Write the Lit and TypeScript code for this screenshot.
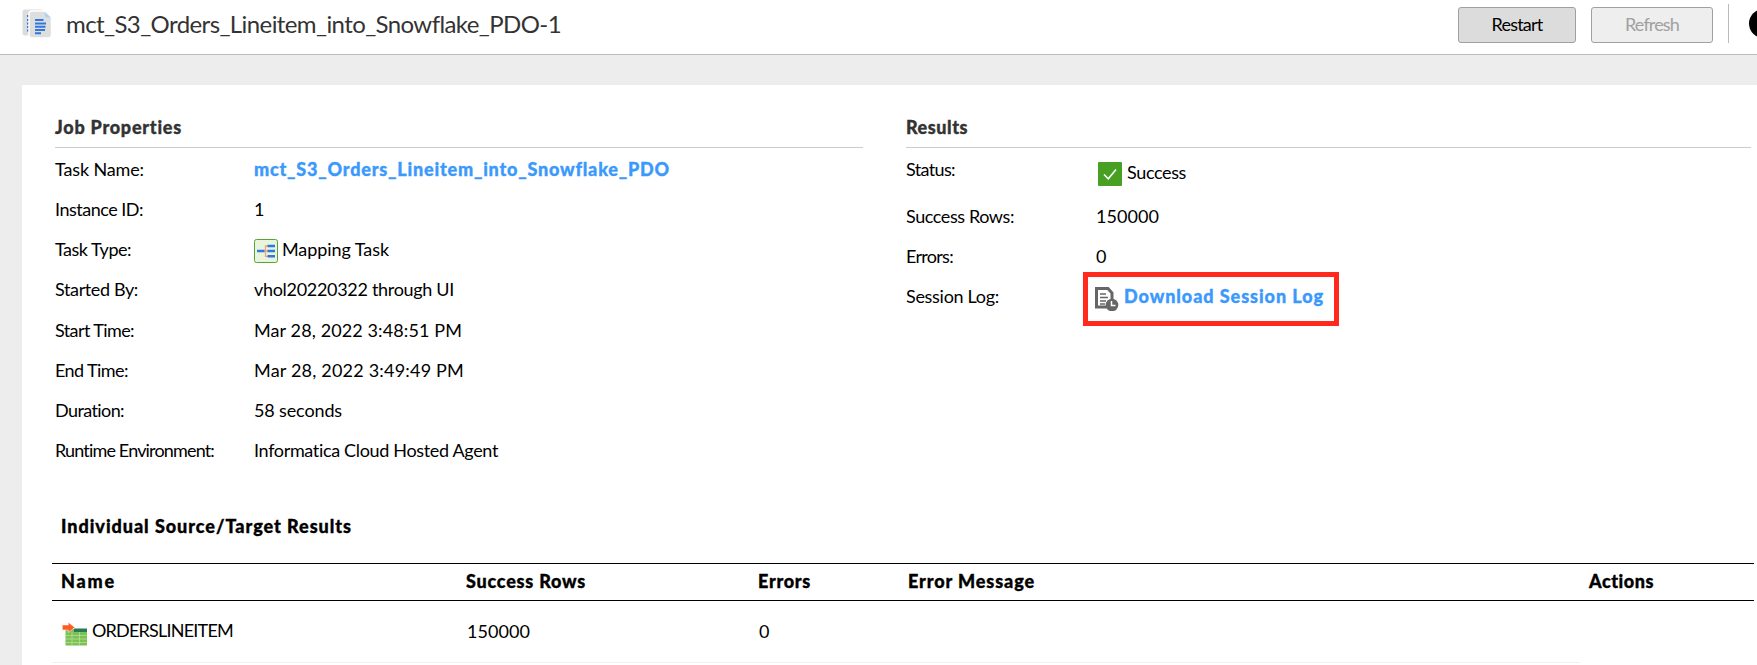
import { LitElement, html, css } from "lit";
import { customElement, property } from "lit/decorators.js";

/** A single-line label tracked so that it fills a given measure. */
@customElement("ui-text")
class UiText extends LitElement {
  @property({ type: Number }) measure = 0;
  @property() text = "";
  static styles = css`
    :host { display: block; flex: none; height: 24px; line-height: 24px; white-space: nowrap; }
    .t { display: inline-block; font-variant-ligatures: none; }
  `;
  render() { return html`<span class="t">${this.text}</span>`; }
  updated() {
    const el = this.renderRoot.querySelector<HTMLElement>(".t")!;
    el.style.letterSpacing = "0px";
    const natural = el.getBoundingClientRect().width;
    el.style.letterSpacing = `${(this.measure - natural) / this.text.length}px`;
  }
}

const t = (text: string, measure: number) => html`<ui-text .text=${text} .measure=${measure}></ui-text>`;

const docsIcon = html`<svg class="icon" width="30" height="30" viewBox="0 0 30 30">
  <rect x=".5" y=".5" width="21" height="26" rx="2.5" fill="#dcdcdc"/>
  <path d="M5 7h3M5 11h3M5 14.500h3M5 18h3M5 21.500h3" stroke="#2f78e0" stroke-width="2"/>
  <path d="M10 2h13l6.500 7v17a3 3 0 0 1-3 3h-16.500a3 3 0 0 1-3-3v-21a3 3 0 0 1 3-3z" fill="#dedede" stroke="#fff" stroke-width="1.500"/>
  <path d="M23 3v3.500a2 2 0 0 0 2 2h4z" fill="#a9d3fb"/>
  <path d="M13 11h8.500M13 14.500h11M13 17.700h10.500M13 21h10M13 24.300h6" stroke="#2f78e0" stroke-width="2"/>
</svg>`;

const mappingIcon = html`<svg class="icon" width="24" height="24" viewBox="0 0 24 24">
  <rect x=".5" y=".5" width="23" height="23" rx="2" fill="#e8f5dc" stroke="#55a630"/>
  <path d="M14 7h-2.500v10.300h2.500M10 12h4" fill="none" stroke="#f4a07c" stroke-width="1.300"/>
  <path d="M3 12h7.500M13.500 7h7.500M13.500 12h7.500M13.500 17.300h7.500" stroke="#2f78e0" stroke-width="2.600"/>
</svg>`;

const checkIcon = html`<svg class="icon" width="24" height="24" viewBox="0 0 24 24">
  <rect width="24" height="24" rx="1" fill="#48a023"/>
  <path d="M6 12.500l4.300 4.200L18 7.500" fill="none" stroke="#fff" stroke-width="1.600"/>
</svg>`;

const logIcon = html`<svg class="icon" width="24" height="24" viewBox="0 0 24 24">
  <path d="M1.500 1.500h11.500l4 4.500V20h-15.500z" fill="#fff" stroke="#666" stroke-width="3"/>
  <path d="M5 7h6M5 10.500h8M5 14h6M5 17h5" stroke="#666" stroke-width="1.500"/>
  <circle cx="17" cy="18" r="6.300" fill="#666"/>
  <path d="M16.500 14v4.500h4" fill="none" stroke="#fff" stroke-width="1.500"/>
</svg>`;

const tableIcon = html`<svg class="icon" width="26" height="24" viewBox="0 0 26 24">
  <rect x="3.500" y="7" width="21.500" height="16.500" fill="#7cc152"/>
  <rect x="12" y="6.500" width="13" height="3.500" fill="#267a55"/>
  <path d="M3.500 13.500h21.500M3.500 17h21.500M3.500 20.500h21.500M10 10v13.500M17.500 10v13.500" stroke="#b5dd9b" stroke-width=".8"/>
  <path d="M.3 3h6V.3l6.500 5.200-6.500 5V8h-6z" fill="#ff5a26" stroke="#fff" stroke-width=".5"/>
</svg>`;

const jobRows = [
  { label: "Task Name:", lw: 89, value: "mct_S3_Orders_Lineitem_into_Snowflake_PDO", vw: 416, link: true },
  { label: "Instance ID:", lw: 88, value: "1", vw: 9 },
  { label: "Task Type:", lw: 76, value: "Mapping Task", vw: 107, icon: mappingIcon },
  { label: "Started By:", lw: 83, value: "vhol20220322 through UI", vw: 200 },
  { label: "Start Time:", lw: 79, value: "Mar 28, 2022 3:48:51 PM", vw: 208 },
  { label: "End Time:", lw: 73, value: "Mar 28, 2022 3:49:49 PM", vw: 210 },
  { label: "Duration:", lw: 69, value: "58 seconds", vw: 88 },
  { label: "Runtime Environment:", lw: 159, value: "Informatica Cloud Hosted Agent", vw: 244 },
];

@customElement("app-root")
class AppRoot extends LitElement {
  static styles = css`
    :host { display: flex; flex-direction: column; height: 665px; overflow: hidden; background: #ededed;
      font-family: Lato, "Open Sans", sans-serif; font-size: 18px; color: #000; }
    * { box-sizing: border-box; }
    .icon { display: block; flex: none; }
    .head { flex: none; height: 55px; display: flex; align-items: flex-start; background: #fff; border-bottom: 1px solid #bbb; padding-left: 22px; overflow: hidden; }
    .head .icon { margin: 9px 14px 0 0; }
    .title { font-size: 24px; color: #333; margin-top: 12px; flex: 1; }
    .btn { flex: none; display: flex; justify-content: center; height: 36px; margin-top: 7px; padding: 4px 0 0; border: 1px solid #a0a0a0; border-radius: 3px; background: #dcdcdc; font: inherit; color: #000; }
    .restart { width: 118px; margin-right: 15px; }
    .refresh { width: 122px; background: #eee; color: #a0a0a0; margin-right: 15px; }
    .rule { width: 1px; height: 39px; margin: 4px 20px 0 0; background: #bbb; }
    .clip { width: 8px; height: 30px; margin-top: 9px; overflow: hidden; }
    .avatar { width: 29px; height: 29px; border-radius: 50%; background: #000; }
    .card { flex: 1; margin: 30px 0 0 22px; background: #fff; }
    .cols { display: flex; gap: 43px; padding: 30px 0 0 33px; height: 416px; }
    .job { width: 808px; }
    .res { width: 845px; }
    h2, h3, .thead, .link { font-weight: 900; -webkit-text-stroke: .35px currentColor; }
    h2 { margin: 0 0 9px; height: 33px; font-size: 18px; color: #333; border-bottom: 1px solid #ccc; }
    .row { display: flex; height: 40.150px; }
    .label { width: 199px; flex: none; }
    .res .label { width: 190px; }
    .val { display: flex; }
    .val .icon { margin: 2px 4px 0 0; }
    .link { color: #3b99fc; }
    .status { height: 47px; }
    .status .val { padding: 3px 0 0 2px; }
    .status .icon { margin: 2px 5px 0 0; }
    .log { align-self: flex-start; border: 5px solid #ff2a1d; width: 256px; height: 54px; margin: -12px 0 0 -13px; padding: 7px 0 0 7px; }
    .log .icon { margin: 3px 5px 0 0; }
    h3 { margin: 0 0 0 39px; padding-top: 13px; height: 62px; font-size: 18px; }
    .grid { display: grid; grid-template-columns: 405px 292px 150px 681px 1fr; }
    .table { margin: 0 3px 0 30px; }
    .thead { height: 38px; border: solid #000; border-width: 1px 0; padding: 5px 0 0 9px; }
    .tbody { width: 1528px; height: 62px; padding: 17px 0 0 9px; border-bottom: 1px solid #f0f0f0; }
    .name { display: flex; }
    .name .icon { margin: 4px 4px 0 1px; }
    .num { padding: 1px 0 0 1px; }
  `;

  render() {
    return html`
      <header class="head">
        ${docsIcon}
        <div class="title">${t("mct_S3_Orders_Lineitem_into_Snowflake_PDO-1", 495)}</div>
        <button class="btn restart">${t("Restart", 51)}</button>
        <button class="btn refresh" disabled>${t("Refresh", 54)}</button>
        <div class="rule"></div>
        <div class="clip"><div class="avatar"></div></div>
      </header>
      <main class="card">
        <div class="cols">
          <section class="job">
            <h2>${t("Job Properties", 127)}</h2>
            ${jobRows.map((r) => html`<div class="row">
              <div class="label">${t(r.label, r.lw)}</div>
              <div class="val ${r.link ? "link" : ""}">${r.icon ?? ""}${t(r.value, r.vw)}</div>
            </div>`)}
          </section>
          <section class="res">
            <h2>${t("Results", 62)}</h2>
            <div class="row status"><div class="label">${t("Status:", 49)}</div><div class="val">${checkIcon}${t("Success", 59)}</div></div>
            <div class="row rows"><div class="label">${t("Success Rows:", 108)}</div><div class="val">${t("150000", 63)}</div></div>
            <div class="row"><div class="label">${t("Errors:", 47)}</div><div class="val">${t("0", 11)}</div></div>
            <div class="row"><div class="label">${t("Session Log:", 93)}</div><div class="val link log">${logIcon}${t("Download Session Log", 200)}</div></div>
          </section>
        </div>
        <h3>${t("Individual Source/Target Results", 291)}</h3>
        <div class="table">
          <div class="grid thead">
            ${t("Name", 55)}${t("Success Rows", 120)}${t("Errors", 53)}${t("Error Message", 127)}${t("Actions", 65)}
          </div>
          <div class="grid tbody">
            <div class="name">${tableIcon}${t("ORDERSLINEITEM", 141)}</div>
            <div class="num">${t("150000", 63)}</div>
            <div class="num">${t("0", 11)}</div>
          </div>
        </div>
      </main>`;
  }
}
